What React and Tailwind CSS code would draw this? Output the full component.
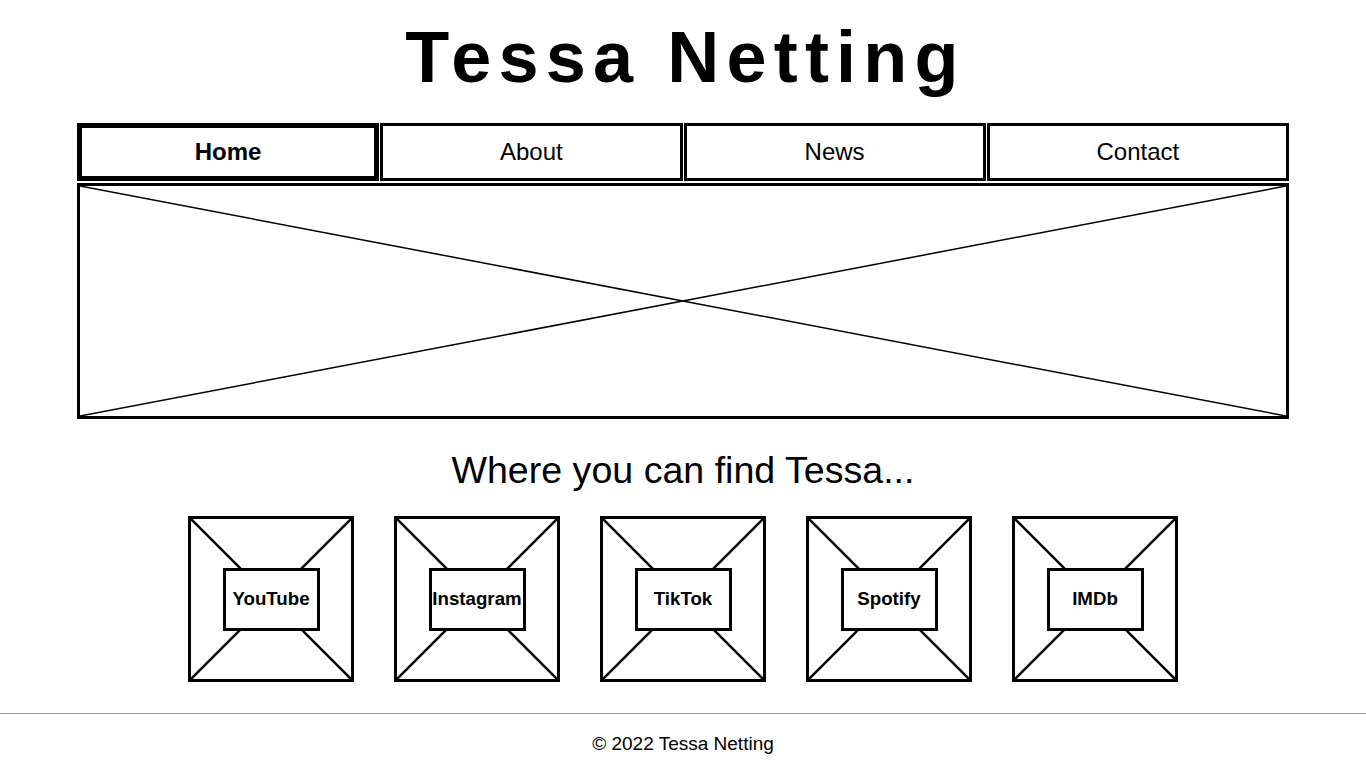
import React from 'react';

const links = ['YouTube', 'Instagram', 'TikTok', 'Spotify', 'IMDb'];
const navItems = ['Home', 'About', 'News', 'Contact'];

function Cross({ width = 2 }) {
    return (
        <svg className="absolute inset-0 w-full h-full" viewBox="0 0 100 100" preserveAspectRatio="none">
            <line x1="0" y1="0" x2="100" y2="100" stroke="black" strokeWidth={width} vectorEffect="non-scaling-stroke" />
            <line x1="100" y1="0" x2="0" y2="100" stroke="black" strokeWidth={width} vectorEffect="non-scaling-stroke" />
        </svg>
    );
}

function LinkCard({ label }) {
    return (
        <div className="relative w-[166px] h-[166px] border-[3px] border-black flex items-center justify-center">
            <Cross width={2.5} />
            {/* label box sits on top of the cross */}
            <div className="relative z-10 w-[97px] h-[63px] border-[3px] border-black bg-white flex items-center justify-center">
                <span className="text-[18.7px] font-bold whitespace-nowrap">{label}</span>
            </div>
        </div>
    );
}

function App() {
    return (
        <div className="min-h-screen bg-white text-black font-['Liberation_Sans',Arial,sans-serif]">
            <div className="w-[1212px] mx-auto">
                <h1 className="mt-[21px] text-center text-[72px] leading-none font-bold tracking-widest pl-[5px]">
                    Tessa Netting
                </h1>

                <nav className="mt-[30px] grid grid-cols-4 gap-px h-[58px]">
                    {navItems.map((item, i) => (
                        <a
                            key={item}
                            href="#"
                            className={i === 0
                                ? 'border-[5px] border-black flex items-center justify-center text-[24px] font-bold'
                                : 'border-[3px] border-black flex items-center justify-center text-[24px]'}
                        >
                            {item}
                        </a>
                    ))}
                </nav>

                <div className="relative mt-[2px] h-[236px] border-[3px] border-black">
                    <Cross width={1.5} />
                </div>

                <h2 className="mt-[31px] text-center text-[37.6px] leading-[40px]">Where you can find Tessa...</h2>

                <div className="mt-[26px] flex justify-center gap-[40px]">
                    {links.map((l) => (
                        <LinkCard key={l} label={l} />
                    ))}
                </div>
            </div>

            <footer className="mt-[31px]">
                <hr className="border-0 border-t border-[#999999]" />
                <p className="mt-[16px] text-center text-[19px] leading-[28px]">© 2022 Tessa Netting</p>
            </footer>
        </div>
    );
}

export default App;
